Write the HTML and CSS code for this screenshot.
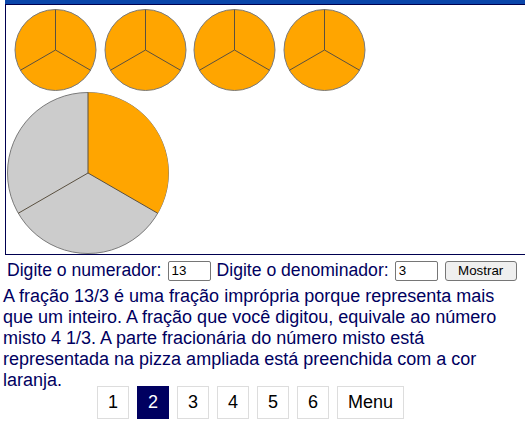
FILE: index.html
```html
<!DOCTYPE html>
<html lang="pt">
<head>
  <meta charset="UTF-8" />
  <title>Frações impróprias</title>
  <link rel="stylesheet" href="styles.css">
</head>
<body>

  <div class="topbar"></div>
  <div class="canvas">
    <svg class="pizzas" width="540" height="249" viewBox="0 0 540 249">
      <defs>
        <g id="pizza">
          <circle r="40.5" fill="#ffa500" stroke="#7a7a7a" />
          <path d="M0,0 L0,-40.5 M0,0 L35.07,20.25 M0,0 L-35.07,20.25" stroke="#5a5040" />
        </g>
      </defs>
      <use href="#pizza" transform="translate(49.5,45)" />
      <use href="#pizza" transform="translate(139.5,45)" />
      <use href="#pizza" transform="translate(228.5,45)" />
      <use href="#pizza" transform="translate(318.5,45)" />

      <g transform="translate(82,168)">
        <circle r="80.5" fill="#cccccc" stroke="#7a7a7a" />
        <path d="M0,0 L0,-80.5 A80.5,80.5 0 0 1 69.71,40.25 Z" fill="#ffa500" />
        <path d="M0,0 L0,-80.5 M0,0 L69.71,40.25 M0,0 L-69.71,40.25" stroke="#5a5040" />
      </g>
    </svg>
  </div>

  <form class="entrada" onsubmit="return false">
    <label for="numerador">Digite o numerador:</label>
    <input type="text" id="numerador" value="13" />
    <label for="denominador">Digite o denominador:</label>
    <input type="text" id="denominador" value="3" />
    <button type="submit">Mostrar</button>
  </form>

  <p class="resposta">A fração 13/3 é uma fração imprópria porque representa mais que um inteiro. A fração que você digitou, equivale ao número misto 4 1/3. A parte fracionária do número misto está representada na pizza ampliada está preenchida com a cor laranja.</p>

  <div class="paginas">
    <a href="#">1</a>
    <a href="#" class="ativa">2</a>
    <a href="#">3</a>
    <a href="#">4</a>
    <a href="#">5</a>
    <a href="#">6</a>
    <a href="#">Menu</a>
  </div>

</body>
</html>
```

FILE: styles.css
```css
html, body {
  overflow: hidden;
}
body {
  margin: 0;
  font-family: Arial, 'Liberation Sans', sans-serif;
  font-size: 18px;
  color: #000060;
  background: #fff;
}
.topbar {
  height: 4px;
  margin-left: 5px;
  background-color: #0a46aa;
}
.canvas {
  width: 540px;
  height: 249px;
  margin-left: 5px;
  border: 1px solid #000050;
}
.pizzas {
  display: block;
}
.entrada {
  display: flex;
  align-items: center;
  gap: 6px;
  margin: 5px 0 0;
  padding-left: 7px;
}
.entrada label {
  font-size: 17.6px;
}
.entrada input {
  width: 43px;
  height: 20px;
  box-sizing: border-box;
  padding: 1px 3px;
  border: 1px solid #767676;
  border-radius: 2px;
  font-family: Arial, 'Liberation Sans', sans-serif;
  font-size: 13.33px;
  color: #000;
}
.entrada button {
  width: 72px;
  height: 20px;
  margin-left: 1px;
  padding: 0;
  background-color: #efefef;
  border: 1px solid #767676;
  border-radius: 3px;
  font-family: Arial, 'Liberation Sans', sans-serif;
  font-size: 13.33px;
  color: #000;
}
.resposta {
  margin: 5px 3px 0;
}
.paginas {
  display: flex;
  gap: 8px;
  margin: -5px 0 0 97px;
}
.paginas a {
  height: 33px;
  box-sizing: border-box;
  line-height: 31px;
  padding: 0 10px;
  border: 1px solid #dddddd;
  color: #000;
  text-decoration: none;
}
.paginas a.ativa {
  background-color: #000060;
  border-color: #000060;
  color: #fff;
}
```
